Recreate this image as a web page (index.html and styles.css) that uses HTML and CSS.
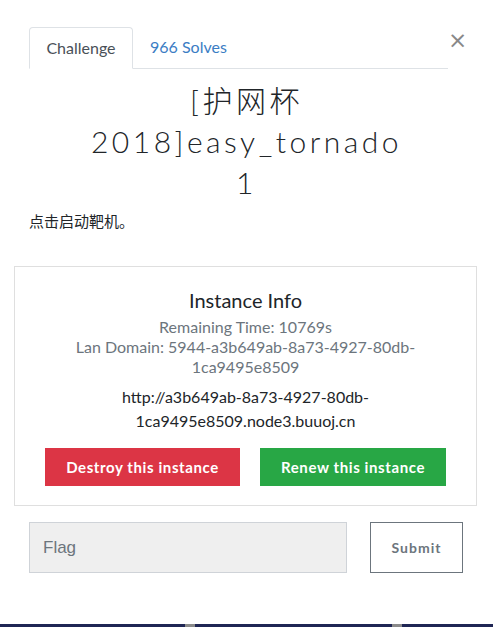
FILE: index.html
```html
<!DOCTYPE html>
<html lang="zh">
<head>
<meta charset="utf-8">
<title>Challenge</title>
<link rel="stylesheet" href="styles.css">
</head>
<body>
<div class="page">
  <div class="modal">
    <div class="head">
      <ul class="tabs">
        <li class="tab active">Challenge</li>
        <li class="tab link">966 Solves</li>
      </ul>
      <span class="close">&times;</span>
    </div>
    <h1 class="title">[护网杯<br>2018]easy_tornado<br>1</h1>
    <p class="desc">点击启动靶机。</p>
    <div class="card">
      <h4 class="card-title">Instance Info</h4>
      <p class="muted">Remaining Time: 10769s</p>
      <p class="muted">Lan Domain: 5944-a3b649ab-8a73-4927-80db-<br>1ca9495e8509</p>
      <p class="url">http://a3b649ab-8a73-4927-80db-<br>1ca9495e8509.node3.buuoj.cn</p>
      <div class="actions">
        <button class="btn danger">Destroy this instance</button>
        <button class="btn success">Renew this instance</button>
      </div>
    </div>
    <div class="submit-row">
      <input class="flag" type="text" placeholder="Flag">
      <button class="submit">Submit</button>
    </div>
  </div>
  <div class="footer-bar"></div>
</div>
</body>
</html>
```
FILE: styles.css
```css
* { box-sizing: border-box; }
html, body { margin: 0; padding: 0; background: #fff; }
body { font-family: Lato, "Noto Sans CJK SC", sans-serif; color: #212529; }
.page { width: 493px; height: 627px; display: flex; flex-direction: column; }
.modal { flex: 1; padding: 27px 0 0 0; }
.head { display: flex; align-items: flex-start; padding: 0 0 0 29px; }
.tabs { list-style: none; margin: 0; padding: 0; display: flex; width: 419px; border-bottom: 1px solid #dee2e6; height: 42px; }
.tab { font-size: 16px; height: 42px; line-height: 40px; padding: 0 16px; }
.tab.active { border: 1px solid #dee2e6; border-bottom-color: #fff; border-radius: 4px 4px 0 0; color: #495057; width: 104px; text-align: center; background: #fff; padding: 0; }
.tab.link { color: #3b7dc4; padding-left: 17px; }
.close { font-size: 23px; line-height: 24px; color: #888; font-weight: 400; margin: 1px 0 0 0; font-family: "DejaVu Sans", sans-serif; }
.title { margin: 11px 0 0 0; text-align: center; font-family: Lato, "Noto Sans CJK SC", sans-serif; font-weight: 300; font-size: 30px; line-height: 41px; letter-spacing: 3.5px; color: #212529; }
.desc { margin: 8px 0 0 29px; font-size: 15px; line-height: 20px; font-family: "Noto Sans CJK SC", sans-serif; color: #212529; }
.card { margin: 35px 16px 0 14px; border: 1px solid #dfdfdf; padding: 21px 8px 19px; text-align: center; }
.card-title { margin: 0 0 5px; font-size: 20px; font-weight: 400; line-height: 24px; color: #212529; }
.muted { margin: 0; color: #6c757d; font-size: 16px; line-height: 20px; }
.url { margin: 8px 0 0; color: #212529; font-size: 16px; line-height: 24px; }
.actions { display: flex; justify-content: center; gap: 20px; margin-top: 15px; }
.btn { border: 0; height: 38px; color: #fff; font-family: Lato, sans-serif; font-weight: 700; font-size: 15px; letter-spacing: 0.6px; padding: 0; }
.danger { background: #dc3545; width: 195px; }
.success { background: #28a745; width: 186px; }
.submit-row { display: flex; gap: 23px; margin: 16px 0 0 29px; }
.flag { width: 318px; height: 51px; background: #efefef; border: 1px solid #cfd3d8; font-family: "Liberation Sans", Arial, sans-serif; font-size: 17px; padding: 0 13px; color: #495057; outline: none; }
.flag::placeholder { color: #6c757d; }
.submit { width: 93px; height: 51px; background: #fff; border: 1px solid #6c757d; color: #6c757d; font-family: Lato, sans-serif; font-weight: 700; font-size: 14px; letter-spacing: 1px; padding: 0; }
.footer-bar { height: 3px; background: linear-gradient(to right, #1f2654 0, #1f2654 185px, #8a8a8a 185px, #8a8a8a 195px, #1f2654 195px, #1f2654 392px, #8a8a8a 392px, #8a8a8a 402px, #1f2654 402px); }
```
